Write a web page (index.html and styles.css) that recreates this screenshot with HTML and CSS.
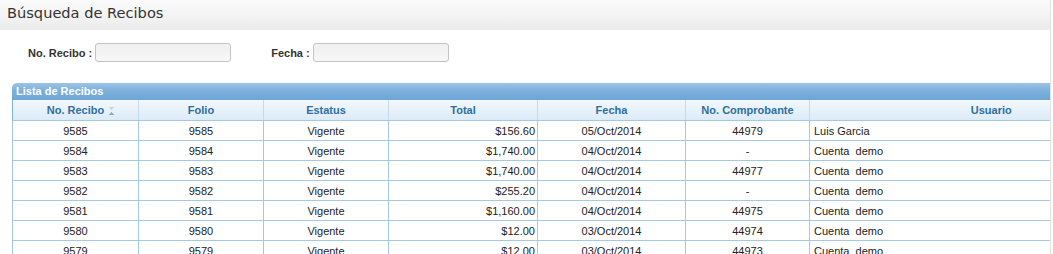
FILE: index.html
```html
<!DOCTYPE html>
<html lang="es">
<head>
  <meta charset="UTF-8">
  <title>Búsqueda de Recibos</title>
  <link rel="stylesheet" href="styles.css">
</head>
<body>
  <div id="page">
    <!-- Encabezado -->
    <div class="title-bar">Búsqueda de Recibos</div>

    <!-- Filtros -->
    <div class="filters">
      <label class="field">No. Recibo : <input type="text" class="text-input"></label>
      <label class="field">Fecha : <input type="text" class="text-input"></label>
    </div>

    <!-- Lista -->
    <div class="grid">
      <div class="grid-caption">Lista de Recibos</div>
      <table class="grid-table">
        <colgroup>
          <col style="width:126px">
          <col style="width:125px">
          <col style="width:125px">
          <col style="width:149px">
          <col style="width:148px">
          <col style="width:124px">
          <col>
        </colgroup>
        <thead>
          <tr>
            <th class="sorted">No. Recibo<span class="sort-icon"></span></th>
            <th>Folio</th>
            <th>Estatus</th>
            <th>Total</th>
            <th>Fecha</th>
            <th>No. Comprobante</th>
            <th>Usuario</th>
          </tr>
        </thead>
        <tbody id="rows"></tbody>
      </table>
    </div>
  </div>

  <script>
    const recibos = [
      ["9585", "$156.60", "05/Oct/2014", "44979", "Luis Garcia"],
      ["9584", "$1,740.00", "04/Oct/2014", "-", "Cuenta&nbsp; demo"],
      ["9583", "$1,740.00", "04/Oct/2014", "44977", "Cuenta&nbsp; demo"],
      ["9582", "$255.20", "04/Oct/2014", "-", "Cuenta&nbsp; demo"],
      ["9581", "$1,160.00", "04/Oct/2014", "44975", "Cuenta&nbsp; demo"],
      ["9580", "$12.00", "03/Oct/2014", "44974", "Cuenta&nbsp; demo"],
      ["9579", "$12.00", "03/Oct/2014", "44973", "Cuenta&nbsp; demo"]
    ];

    const tbody = document.getElementById("rows");
    recibos.forEach(function (r) {
      const tr = document.createElement("tr");
      tr.innerHTML =
        '<td>' + r[0] + '</td>' +
        '<td>' + r[0] + '</td>' +
        '<td>Vigente</td>' +
        '<td class="num">' + r[1] + '</td>' +
        '<td>' + r[2] + '</td>' +
        '<td>' + r[3] + '</td>' +
        '<td class="left">' + r[4] + '</td>';
      tbody.appendChild(tr);
    });
  </script>
</body>
</html>
```

FILE: styles.css
```css
/* Generales */
body {
  margin: 0;
  font-family: "Liberation Sans", Arial, sans-serif;
  font-size: 11px;
  color: #222;
  background: #fff;
  overflow: hidden;
}
#page {
  width: 1050px;
  min-height: 254px;
  overflow: hidden;
  border-right: 1px solid #e2e2e2;
}
/* Encabezado */
.title-bar {
  height: 30px;
  padding-left: 7px;
  font-family: "DejaVu Sans", Verdana, sans-serif;
  font-size: 14.6px;
  line-height: 25px;
  color: #333;
  background: linear-gradient(#fbfbfb, #ebebeb);
}
/* Filtros */
.filters {
  display: flex;
  gap: 40px;
  padding: 13px 0 0 28px;
  height: 40px;
}
.field {
  display: flex;
  align-items: center;
  gap: 3px;
  height: 19px;
  font-weight: bold;
  color: #333;
}
.text-input {
  width: 130px;
  height: 15px;
  margin: 0;
  padding: 1px 2px;
  border: 1px solid #c4c4c4;
  border-radius: 3px;
  background: linear-gradient(#f0f0f0, #f7f7f7);
}
/* Lista */
.grid {
  margin-left: 12px;
}
.grid-caption {
  height: 17px;
  line-height: 17px;
  padding-left: 4px;
  color: #fff;
  font-weight: bold;
  border-top-left-radius: 5px;
  background: linear-gradient(#9cc4e6 0%, #7cb0dc 45%, #6fa6d6 100%);
}
.grid-table {
  width: 1161px;
  border-collapse: collapse;
  table-layout: fixed;
}
.grid-table th {
  height: 20px;
  padding: 0;
  font-weight: bold;
  color: #2e6e9e;
  border-left: 1px solid #c5dbec;
  border-bottom: 1px solid #a6c9e2;
  background: linear-gradient(#f2f8fd, #dcebf8);
}
.grid-table th:first-child {
  border-left-color: #7fb0db;
}
.grid-table th.sorted {
  position: relative;
}
/* Icono de orden */
.sort-icon {
  position: absolute;
  left: 95px;
  top: 7px;
  width: 7px;
  height: 9px;
  background:
    linear-gradient(to top right, transparent 50%, #c6d6e4 50%) 0 0 / 4px 3px no-repeat,
    linear-gradient(to top left, transparent 50%, #c6d6e4 50%) 3px 0 / 4px 3px no-repeat,
    linear-gradient(to bottom right, transparent 50%, #86aed2 50%) 0 5px / 4px 3px no-repeat,
    linear-gradient(to bottom left, transparent 50%, #86aed2 50%) 3px 5px / 4px 3px no-repeat;
}
.grid-table td {
  height: 19px;
  padding: 0 2px;
  text-align: center;
  white-space: nowrap;
  border: 1px solid #a6c9e2;
  border-top: none;
}
.grid-table td.num {
  text-align: right;
}
.grid-table td.left {
  text-align: left;
  padding-left: 4px;
}
```
